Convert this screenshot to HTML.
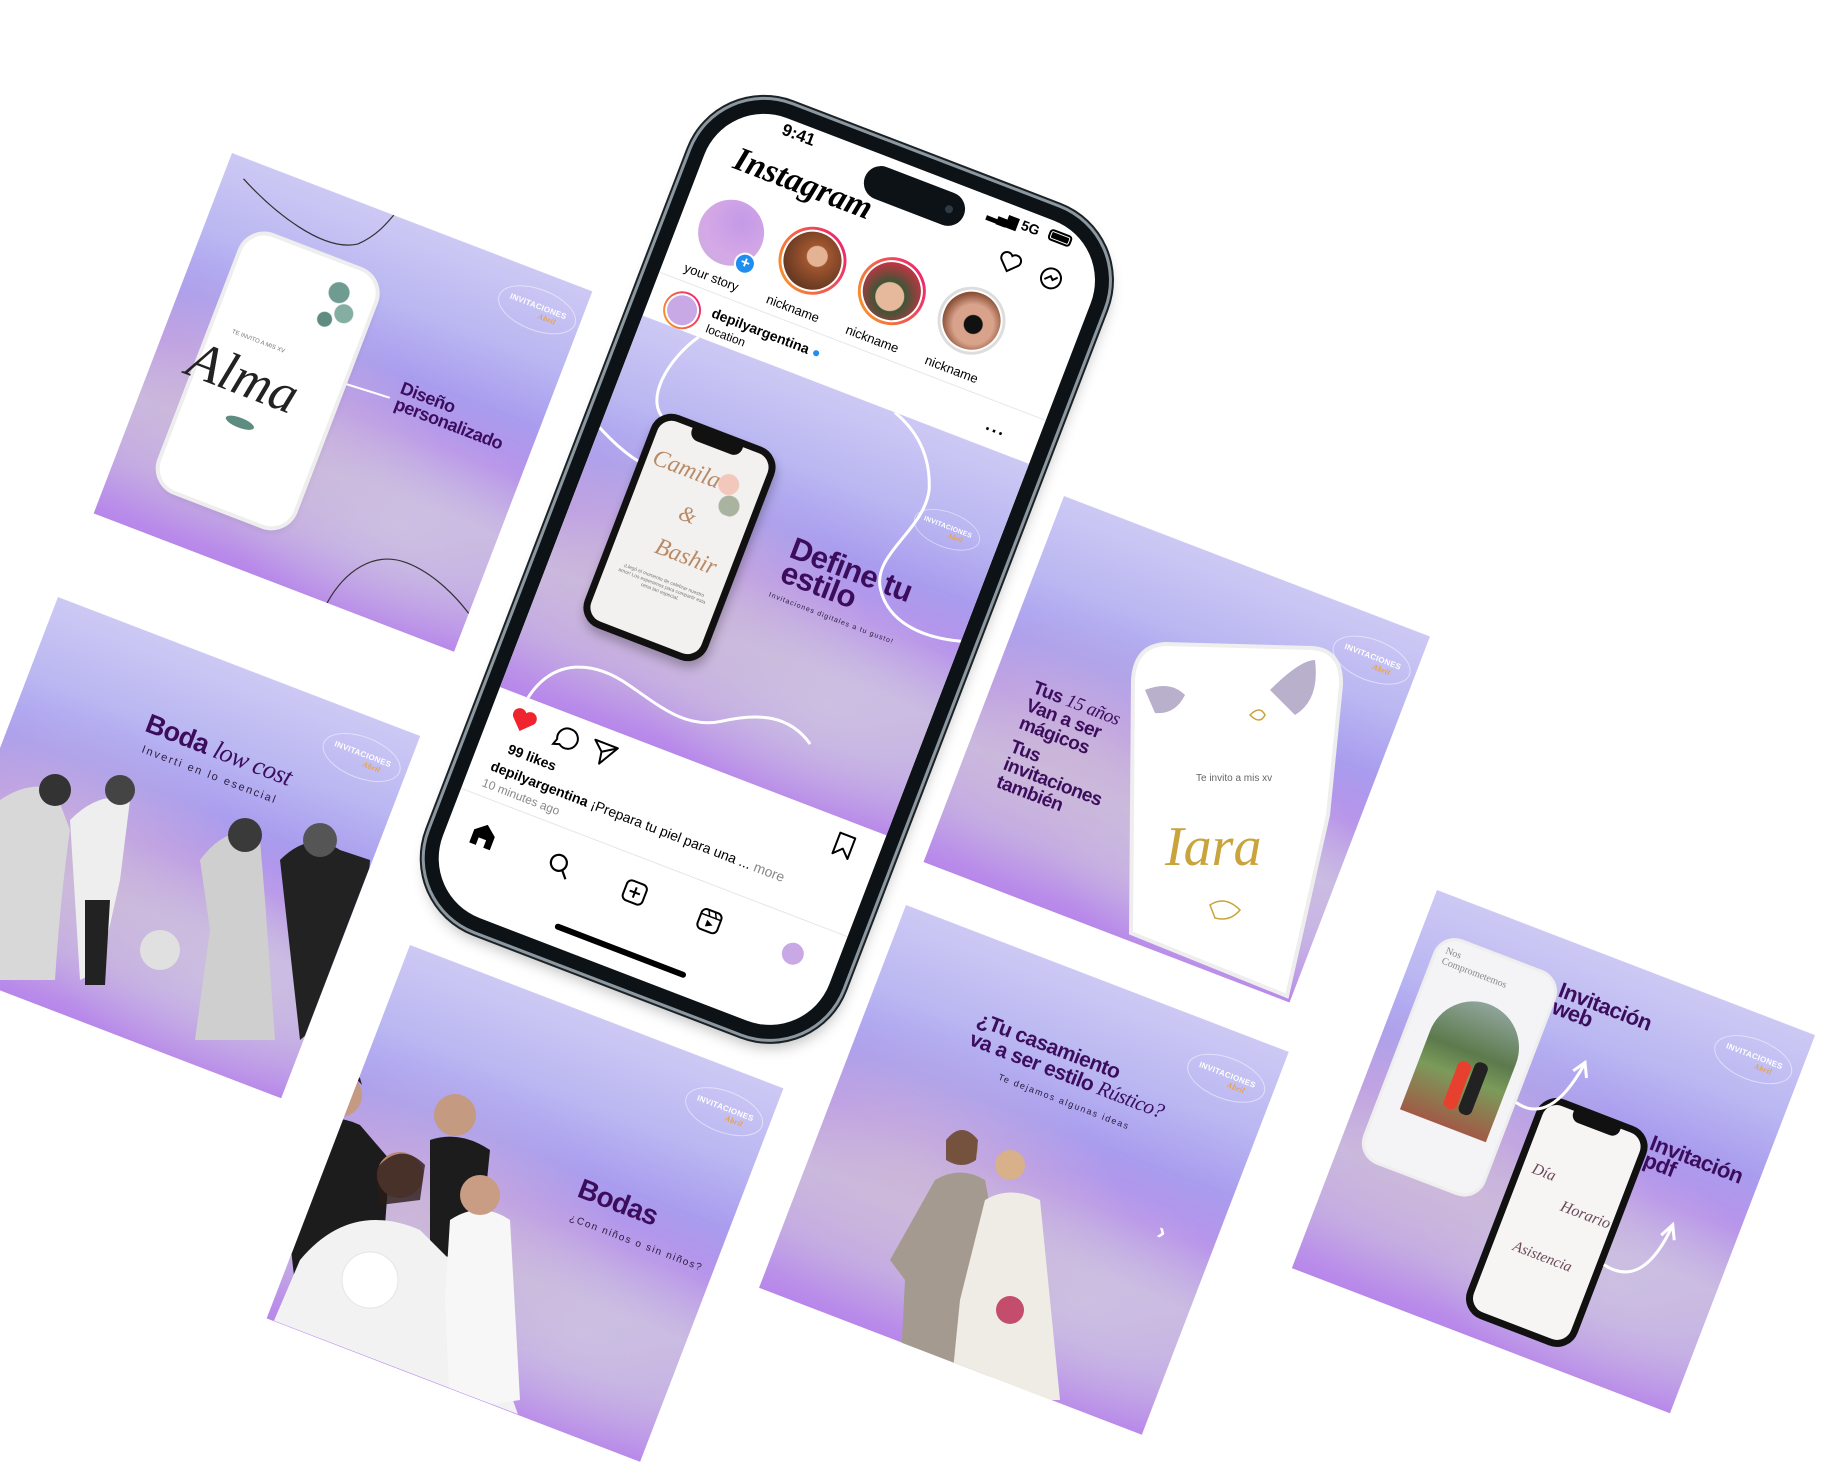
<!DOCTYPE html>
<html><head><meta charset="utf-8">
<style>
*{margin:0;padding:0;box-sizing:border-box}
body{width:1826px;height:1470px;background:#fff;position:relative;overflow:hidden;font-family:"Liberation Sans",sans-serif}
.card{position:absolute;transform-origin:0 0;transform:rotate(21deg);overflow:hidden;
background:
radial-gradient(ellipse 55% 35% at 25% 62%, rgba(205,185,215,.85) 0%, rgba(205,185,215,0) 100%),
radial-gradient(ellipse 50% 30% at 75% 75%, rgba(205,195,225,.8) 0%, rgba(205,195,225,0) 100%),
linear-gradient(180deg,#cdc9f4 0%,#b9b6f2 22%,#a99cee 38%,#b893ea 52%,#c8b7e2 68%,#c2a8e6 84%,#b786ea 100%);}
.abs{position:absolute}
.t{color:#3b0d5c;font-weight:700;letter-spacing:-0.5px}
.logo{position:absolute;width:82px;height:42px;border:1px solid rgba(255,255,255,.5);border-radius:50%;color:#fff;font-size:8px;font-weight:700;text-align:center;padding-top:12px;letter-spacing:.3px}
.logo i{display:block;color:#e8a24a;font-size:8px;font-style:italic;font-family:"Liberation Serif",serif;margin-left:25px}
.script{font-family:"Liberation Serif",serif;font-style:italic;font-weight:400}
.ph{position:absolute;transform-origin:0 0;transform:rotate(21deg)}
</style></head><body>

<!-- Card 1 -->
<div class="card" style="left:232px;top:153px;width:386px;height:386px">
  <svg class="abs" style="left:0;top:0" width="386" height="386"><path d="M20 20 C60 40 120 60 150 40 C165 25 170 10 175 -5" stroke="#333" stroke-width="1.2" fill="none"/><path d="M250 386 C255 350 275 320 310 320 C340 320 370 335 386 345" stroke="#333" stroke-width="1.2" fill="none"/><line x1="187" y1="175" x2="235" y2="172" stroke="#fff" stroke-width="2"/></svg>
  <div class="abs" style="left:44px;top:64px;width:142px;height:272px;background:#fff;border-radius:24px;box-shadow:0 0 0 4px #eee,2px 4px 8px rgba(0,0,0,.1)">
    <div class="abs" style="left:90px;top:10px;width:40px;height:60px;background:radial-gradient(circle at 40% 30%,#6f9c90 0 10px,transparent 11px),radial-gradient(circle at 70% 60%,#85aea2 0 9px,transparent 10px),radial-gradient(circle at 30% 80%,#5e8c80 0 7px,transparent 8px)"></div>
    <div class="abs" style="left:20px;top:100px;font-size:6px;color:#777">TE INVITO A MIS XV</div>
    <div class="abs script" style="left:-10px;top:110px;font-size:54px;color:#222">Alma</div>
    <div class="abs" style="left:45px;top:180px;width:30px;height:10px;background:#5e8c80;border-radius:50%"></div>
  </div>
  <div class="abs t" style="left:242px;top:150px;font-size:18px;line-height:17px">Diseño<br>personalizado</div>
  <div class="logo" style="left:300px;top:16px">INVITACIONES<i>Abril</i></div>
</div>

<!-- Card 2 -->
<div class="card" style="left:58px;top:597px;width:388px;height:388px">
  <div class="abs t" style="left:128px;top:70px;font-size:27px">Boda <span class="script" style="font-size:26px">low cost</span></div>
  <div class="abs" style="left:133px;top:106px;font-size:11px;letter-spacing:2px;color:#2a1a3a">Inverti en lo esencial</div>
  <div class="logo" style="left:300px;top:20px">INVITACIONES<i>Abril</i></div>
</div>

<!-- Card 3 -->
<div class="card" style="left:410px;top:945px;width:400px;height:400px">
  <div class="abs t" style="left:245px;top:150px;font-size:28px">Bodas</div>
  <div class="abs" style="left:247px;top:192px;font-size:10px;letter-spacing:1.5px;color:#2a1a3a">¿Con niños o sin niños?</div>
  <div class="logo" style="left:312px;top:22px">INVITACIONES<i>Abril</i></div>
</div>

<!-- Card 4 -->
<div class="card" style="left:906px;top:905px;width:410px;height:410px">
  <div class="abs t" style="left:108px;top:70px;font-size:21px;line-height:21px">¿Tu casamiento<br>va a ser estilo <span class="script" style="font-weight:400">Rústico?</span></div>
  <div class="abs" style="left:148px;top:122px;font-size:9px;letter-spacing:1.5px;color:#2a1a3a">Te dejamos algunas ideas</div>
  <div class="abs" style="left:352px;top:200px;color:#fff;font-size:24px;font-weight:700">›</div>
  <div class="logo" style="left:320px;top:26px">INVITACIONES<i>Abril</i></div>
</div>

<!-- Card 5 -->
<div class="card" style="left:1064px;top:496px;width:392px;height:392px">
  <div class="abs t" style="left:40px;top:180px;font-size:19px;line-height:19px">Tus <span class="script" style="font-weight:400">15 años</span><br>Van a ser<br>mágicos<br><span style="display:block;height:6px"></span>Tus<br>invitaciones<br>también</div>
  <div class="logo" style="left:305px;top:22px">INVITACIONES<i>Abril</i></div>
</div>
<svg class="abs" style="left:0;top:0" width="1826" height="1470">
  <path d="M1133 680 Q1135 646 1165 644 L1312 648 Q1342 650 1341 685 L1328 815 L1287 996 L1131 933 Z" fill="#fff" stroke="#eee" stroke-width="4"/>
  <text x="1196" y="781" font-family="Liberation Sans" font-size="10" fill="#666">Te invito a mis xv</text>
  <text x="1165" y="865" font-family="Liberation Serif" font-style="italic" font-size="56" fill="#c9a43c">Iara</text>
  <path d="M1145 690 q25 -10 40 5 q-10 20 -30 18 z M1270 690 q30 -30 45 -30 q5 40 -20 55 z" fill="#b9b0cc"/>
  <path d="M1250 715 q10 -10 15 0 q-5 10 -15 0z M1210 905 q15 -10 30 5 q-10 12 -25 8z" fill="none" stroke="#c9a43c" stroke-width="1.5"/>
</svg>

<!-- Card 6 -->
<div class="card" style="left:1437px;top:890px;width:405px;height:405px">
  <div class="abs" style="left:22px;top:40px;width:125px;height:235px;background:#f4f3f5;border-radius:20px;box-shadow:0 0 0 3px #eee">
    <div class="abs" style="left:8px;top:8px;font-family:'Liberation Serif',serif;font-size:10px;color:#888">Nos<br>Comprometemos</div>
    <div class="abs" style="left:22px;top:48px;width:92px;height:130px;border-radius:46px 46px 0 0;background:linear-gradient(180deg,#8fa59a 0%,#5c7a4c 40%,#7b9b5a 60%,#a15a46 100%)"></div>
    <div class="abs" style="left:60px;top:110px;width:14px;height:50px;background:#e8402f;border-radius:6px"></div>
    <div class="abs" style="left:76px;top:105px;width:14px;height:55px;background:#222;border-radius:6px"></div>
  </div>
  <div class="abs" style="left:172px;top:150px;width:118px;height:235px;background:#f6f5f4;border:7px solid #111;border-radius:22px">
    <div class="abs" style="left:28px;top:-2px;width:50px;height:12px;background:#111;border-radius:0 0 8px 8px"></div>
    <div class="abs script" style="left:10px;top:60px;font-size:16px;color:#6a4a5a">Día</div>
    <div class="abs script" style="left:50px;top:85px;font-size:16px;color:#6a4a5a">Horario</div>
    <div class="abs script" style="left:20px;top:140px;font-size:15px;color:#6a4a5a">Asistencia</div>
  </div>
  <div class="abs t" style="left:150px;top:40px;font-size:22px;line-height:18px">Invitación<br>web</div>
  <div class="abs t" style="left:290px;top:150px;font-size:22px;line-height:18px">Invitación<br>pdf</div>
  <svg class="abs" style="left:0;top:0" width="405" height="405"><path d="M150 170 Q190 180 200 110 M192 120 L200 108 L207 122" stroke="#fff" stroke-width="3" fill="none"/><path d="M290 290 Q335 300 340 230 M333 242 L340 228 L347 242" stroke="#fff" stroke-width="3" fill="none"/></svg>
  <div class="logo" style="left:315px;top:24px">INVITACIONES<i>Abril</i></div>
</div>

<!-- Photo cutouts (page coords) -->
<svg class="abs" style="left:0;top:0" width="1826" height="1470">
  <defs>
    <clipPath id="c2"><polygon points="58,597 420,736 281,1098 -81,959"/></clipPath>
    <clipPath id="c3"><polygon points="410,945 783,1088 640,1461 267,1318"/></clipPath>
    <clipPath id="c4"><polygon points="906,905 1289,1052 1142,1435 759,1288"/></clipPath>
  </defs>
  <g clip-path="url(#c2)">
    <path d="M0 800 Q30 780 55 790 L70 830 Q60 900 55 980 L0 980Z" fill="#d8d8d8"/>
    <circle cx="55" cy="790" r="16" fill="#333"/>
    <path d="M70 820 Q100 790 130 800 L120 880 L100 970 L80 980 L75 900Z" fill="#eee"/>
    <circle cx="120" cy="790" r="15" fill="#444"/>
    <path d="M85 900 L110 900 L105 985 L85 985Z" fill="#222"/>
    <path d="M200 860 Q230 820 260 840 L265 900 L275 1040 L195 1040 L210 930Z" fill="#cfcfcf"/>
    <circle cx="245" cy="835" r="17" fill="#3a3a3a"/>
    <circle cx="160" cy="950" r="20" fill="#e0e0e0"/>
    <path d="M280 860 Q310 830 340 850 L370 860 L360 990 L300 1040 L290 950Z" fill="#222"/>
    <circle cx="320" cy="840" r="17" fill="#555"/>
  </g>
  <g clip-path="url(#c3)">
    <path d="M300 1130 Q330 1110 360 1125 L390 1160 L380 1290 L300 1330 L290 1240Z" fill="#1c1c1c"/>
    <circle cx="340" cy="1095" r="22" fill="#c49a80"/><path d="M318 1088 Q340 1060 362 1085 L360 1078 Q340 1065 318 1085Z" fill="#2a1c18"/>
    <path d="M430 1140 Q460 1130 490 1150 L480 1250 L430 1260Z" fill="#1c1c1c"/>
    <circle cx="455" cy="1115" r="21" fill="#c49a80"/>
    <circle cx="400" cy="1175" r="23" fill="#b88870"/><path d="M375 1170 Q400 1140 425 1165 L420 1200 L380 1205Z" fill="#2a1c18" opacity=".8"/>
    <path d="M300 1260 Q350 1200 420 1230 L470 1280 L520 1420 L260 1420 L270 1330Z" fill="#f2f2f2"/>
    <circle cx="370" cy="1280" r="28" fill="#fff" stroke="#e5e5e5"/>
    <path d="M450 1220 Q480 1200 510 1220 L520 1400 L450 1410 L445 1300Z" fill="#f7f7f7"/>
    <circle cx="480" cy="1195" r="20" fill="#c99c84"/>
  </g>
  <g clip-path="url(#c4)">
    <path d="M935 1180 Q960 1165 985 1180 L1000 1260 L990 1380 L900 1380 L905 1280 L890 1260Z" fill="#a49a90"/>
    <circle cx="962" cy="1148" r="16" fill="#c69a80"/><path d="M946 1140 Q962 1120 978 1140 L976 1160 Q962 1170 946 1160Z" fill="#6b4a36" opacity=".9"/>
    <path d="M985 1200 Q1010 1185 1040 1200 L1060 1400 L950 1400 L960 1300Z" fill="#efece6"/>
    <circle cx="1010" cy="1165" r="15" fill="#d8b08a"/>
    <circle cx="1010" cy="1310" r="14" fill="#c34d6a"/>
  </g>
</svg>

<!-- Phone -->
<div class="ph" style="left:729px;top:68px;width:430px;height:915px">
  <div class="abs" style="left:-6px;top:12px;width:442px;height:885px;border-radius:78px;background:#0c1215;box-shadow:0 0 0 3px #8d979f,0 0 0 5px #1b2226,4px 8px 14px rgba(0,0,0,.25)"></div>
  <div class="abs" style="left:8px;top:26px;width:414px;height:857px;border-radius:64px;background:#fff;overflow:hidden">
   <div class="abs" style="left:0;top:-18px;width:414px;height:899px">
    <div class="abs" style="left:64px;top:20px;font-size:17px;font-weight:700">9:41</div>
    <div class="abs" style="left:158px;top:28px;width:106px;height:34px;background:#0c1215;border-radius:18px"><div class="abs" style="right:12px;top:13px;width:8px;height:8px;border-radius:50%;background:#2e3a44"></div></div>
    <div class="abs" style="left:286px;top:25px;font-size:14px;font-weight:700">▂▄▆ 5G</div>
    <div class="abs" style="left:350px;top:26px;width:24px;height:12px;border:2px solid #000;border-radius:4px;padding:1px"><div style="background:#000;width:100%;height:100%;border-radius:1px"></div></div>
    <div class="abs" style="left:30px;top:55px;font-family:'Liberation Serif',serif;font-style:italic;font-weight:700;font-size:34px">Instagram</div>
    <svg class="abs" style="left:312px;top:60px" width="70" height="26"><path d="M12 22 L3 13 A5 5 0 0 1 12 6 A5 5 0 0 1 21 13Z" fill="none" stroke="#000" stroke-width="2"/><circle cx="56" cy="13" r="10" fill="none" stroke="#000" stroke-width="2"/><path d="M50 16 L55 11 L58 14 L62 10" stroke="#000" stroke-width="2" fill="none"/></svg>
    <div class="abs" style="left:20px;top:112px;width:66px;height:66px;border-radius:50%;background:radial-gradient(circle at 60% 30%,#c49ae8,#d5a8e6 60%,#c7b0de)"></div>
    <div class="abs" style="left:66px;top:158px;width:22px;height:22px;border-radius:50%;background:#1e8ef0;border:2px solid #fff;color:#fff;font-size:16px;line-height:17px;text-align:center;font-weight:700">+</div>
    <div class="abs" style="left:22px;top:186px;font-size:13px">your story</div>
    <div class="abs" style="left:105px;top:108px;width:68px;height:68px;border-radius:50%;background:linear-gradient(45deg,#f9a322,#e9157a);padding:3px"><div style="width:100%;height:100%;border-radius:50%;border:2px solid #fff;background:radial-gradient(circle at 55% 40%,#e3b394 0 10px,#a05630 11px,#6a3a22 70%)"></div></div>
    <div class="abs" style="left:110px;top:186px;font-size:13px">nickname</div>
    <div class="abs" style="left:190px;top:108px;width:68px;height:68px;border-radius:50%;background:linear-gradient(45deg,#f9a322,#e9157a);padding:3px"><div style="width:100%;height:100%;border-radius:50%;border:2px solid #fff;background:radial-gradient(circle at 50% 60%,#e7b99c 0 14px,#3e5536 15px,#cc3344 80%)"></div></div>
    <div class="abs" style="left:195px;top:186px;font-size:13px">nickname</div>
    <div class="abs" style="left:275px;top:107px;width:68px;height:68px;border-radius:50%;background:#ddd;padding:3px"><div style="width:100%;height:100%;border-radius:50%;border:2px solid #fff;background:radial-gradient(circle at 55% 55%,#111 0 9px,#d9a28a 10px 20px,#8a5038 70%)"></div></div>
    <div class="abs" style="left:280px;top:186px;font-size:13px">nickname</div>
    <div class="abs" style="left:0;top:207px;width:414px;height:1px;background:#e6e6e6"></div>
    <div class="abs" style="left:16px;top:216px;width:38px;height:38px;border-radius:50%;background:linear-gradient(45deg,#f9a322,#e9157a);padding:2px"><div style="width:100%;height:100%;border-radius:50%;border:2px solid #fff;background:#c9a8e6"></div></div>
    <div class="abs" style="left:64px;top:218px;font-size:14px;font-weight:700">depilyargentina <span style="color:#1e8ef0">●</span></div>
    <div class="abs" style="left:64px;top:236px;font-size:12px">location</div>
    <div class="abs" style="left:360px;top:226px;font-size:18px;font-weight:700;letter-spacing:1px">···</div>
    <div class="abs card" style="transform:none;left:0;top:254px;width:414px;height:398px">
      <svg class="abs" style="left:0;top:0" width="414" height="398"><path d="M60 0 C40 30 30 80 60 90 C90 100 130 70 170 90 M0 120 C40 140 80 150 100 120 M270 0 C300 10 320 30 330 60 C340 100 300 140 320 170 C340 200 380 200 414 190 M30 398 C40 350 80 340 120 350 C160 360 190 370 220 350 C250 330 280 320 310 340" stroke="#fff" stroke-width="3" fill="none"/></svg>
      <div class="abs" style="left:48px;top:80px;width:132px;height:228px;background:#f3f1ef;border:7px solid #111;border-radius:22px;box-shadow:3px 6px 10px rgba(0,0,0,.25)">
        <div class="abs" style="left:32px;top:-2px;width:54px;height:13px;background:#111;border-radius:0 0 9px 9px"></div>
        <div class="abs" style="left:70px;top:20px;width:40px;height:50px;background:radial-gradient(circle at 40% 40%,#f2c8bc 0 10px,transparent 11px),radial-gradient(circle at 60% 80%,#a9b3a0 0 10px,transparent 11px)"></div>
        <div class="abs script" style="left:6px;top:28px;font-size:24px;color:#b98a66">Camila</div>
        <div class="abs script" style="left:50px;top:70px;font-size:22px;color:#b98a66">&amp;</div>
        <div class="abs script" style="left:40px;top:110px;font-size:24px;color:#b98a66">Bashir</div>
        <div class="abs" style="left:10px;top:150px;font-size:5px;color:#777;width:100px;text-align:center">¡Llegó el momento de celebrar nuestro amor! Los esperamos para compartir esta cena tan especial.</div>
      </div>
      <div class="abs t" style="left:222px;top:150px;font-size:31px;line-height:26px">Define tu<br>estilo</div>
      <div class="abs" style="left:218px;top:212px;font-size:7px;letter-spacing:1px;color:#2a1a3a">Invitaciones digitales a tu gusto!</div>
      <div class="logo" style="left:320px;top:70px;transform:scale(.85)">INVITACIONES<i>Abril</i></div>
    </div>
    <svg class="abs" style="left:20px;top:662px" width="390" height="30"><path d="M14 24 L3 13 A6 6 0 0 1 14 5 A6 6 0 0 1 25 13Z" fill="#f0242f"/><path d="M62 4 a10 10 0 1 1 -6 18 l-6 2 l2 -6 a10 10 0 0 1 10 -14z" fill="none" stroke="#000" stroke-width="2"/><path d="M88 5 L112 5 L100 26 L98 14 Z M98 14 L112 5" fill="none" stroke="#000" stroke-width="2" stroke-linejoin="round"/><path d="M350 4 L366 4 L366 26 L358 18 L350 26Z" fill="none" stroke="#000" stroke-width="2" stroke-linejoin="round"/></svg>
    <div class="abs" style="left:30px;top:698px;font-size:14px;font-weight:700">99 likes</div>
    <div class="abs" style="left:20px;top:720px;font-size:14px;white-space:nowrap"><b>depilyargentina</b> ¡Prepara tu piel para una ... <span style="color:#888">more</span></div>
    <div class="abs" style="left:18px;top:740px;font-size:12px;color:#888">10 minutes ago</div>
    <div class="abs" style="left:0;top:760px;width:414px;height:1px;background:#e6e6e6"></div>
    <svg class="abs" style="left:24px;top:782px" width="390" height="30"><path d="M3 26 L3 12 L14 3 L25 12 L25 26 L18 26 L18 18 L10 18 L10 26Z" fill="#000"/><circle cx="94" cy="13" r="8" fill="none" stroke="#000" stroke-width="2.2"/><path d="M100 19 L106 26" stroke="#000" stroke-width="2.2"/><rect x="165" y="3" width="21" height="21" rx="5" fill="none" stroke="#000" stroke-width="2"/><path d="M175.5 8 V19 M170 13.5 H181" stroke="#000" stroke-width="2"/><rect x="245" y="3" width="21" height="21" rx="5" fill="none" stroke="#000" stroke-width="2"/><path d="M245 9 H266 M251 3 L254 9 M258 3 L261 9" stroke="#000" stroke-width="1.5"/><path d="M253 13 L260 16.5 L253 20Z" fill="#000"/><circle cx="345" cy="14" r="11" fill="#c9a8e6"/></svg>
    <div class="abs" style="left:137px;top:852px;width:140px;height:6px;border-radius:3px;background:#000"></div>
   </div>
  </div>
</div>
</body></html>
